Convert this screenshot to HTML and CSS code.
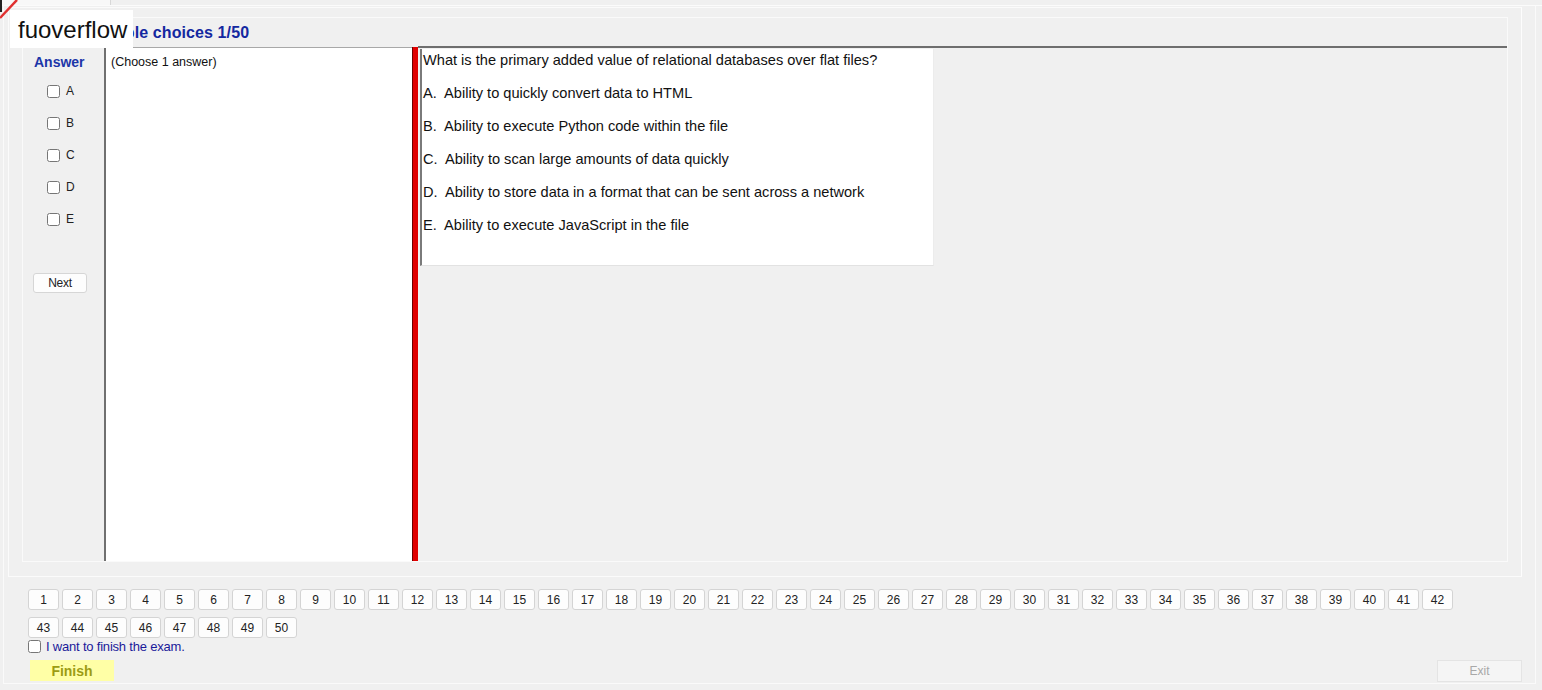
FILE: index.html
```html
<!DOCTYPE html>
<html lang="en">
<head>
    <meta charset="UTF-8">
    <title>Exam - Multiple choices</title>
    <link rel="stylesheet" href="styles.css">
</head>
<body>
    <div class="tabstrip"><div class="tab"></div></div>

    <div class="frame">
        <div class="panel">
            <div class="group">
                <h1 class="title">Multiple choices 1/50</h1>
                <div class="workspace">
                    <div class="answer-col">
                        <div class="answer-head">Answer</div>
                        <label class="opt"><input type="checkbox"> A</label>
                        <label class="opt"><input type="checkbox"> B</label>
                        <label class="opt"><input type="checkbox"> C</label>
                        <label class="opt"><input type="checkbox"> D</label>
                        <label class="opt"><input type="checkbox"> E</label>
                        <button class="next-btn">Next</button>
                    </div>
                    <div class="choose-box">(Choose 1 answer)</div>
                    <div class="splitter"></div>
                    <div class="question-area">
                        <div class="question-box">
                            <p>What is the primary added value of relational databases over flat files?</p>
                            <p>A.&nbsp; Ability to quickly convert data to HTML</p>
                            <p>B.&nbsp; Ability to execute Python code within the file</p>
                            <p>C.&nbsp; Ability to scan large amounts of data quickly</p>
                            <p>D.&nbsp; Ability to store data in a format that can be sent across a network</p>
                            <p>E.&nbsp; Ability to execute JavaScript in the file</p>
                        </div>
                    </div>
                </div>
            </div>
        </div>

        <div class="nav" id="nav"></div>

        <label class="finish-check"><input type="checkbox"> I want to finish the exam.</label>

        <div class="bottom">
            <button class="finish-btn">Finish</button>
            <button class="exit-btn" disabled>Exit</button>
        </div>
    </div>

    <div class="watermark">fuoverflow</div>
    <svg class="corner" width="20" height="20" viewBox="0 0 20 20">
        <line x1="1" y1="0" x2="1" y2="12" stroke="#222" stroke-width="2"/>
        <line x1="0" y1="18" x2="17" y2="0" stroke="#e03030" stroke-width="2.5"/>
    </svg>

    <script>
        // question number buttons, 42 per row
        const nav = document.getElementById('nav');
        let row;
        for (let i = 1; i <= 50; i++) {
            if ((i - 1) % 42 === 0) {
                row = document.createElement('div');
                row.className = 'nav-row';
                nav.appendChild(row);
            }
            const btn = document.createElement('button');
            btn.className = 'num-btn';
            btn.textContent = i;
            row.appendChild(btn);
        }
    </script>
</body>
</html>
```

FILE: styles.css
```css
body {
    margin: 0;
    background-color: #f0f0f0;
    font-family: "Liberation Sans", Arial, sans-serif;
    color: #111;
    width: 1542px;
    height: 690px;
    overflow: hidden;
    position: relative;
}
.tabstrip {
    height: 5px;
    border-bottom: 1px solid #fbfbfb;
}
.tab {
    width: 110px;
    height: 5px;
    background: #f8f8f8;
    border-right: 1px solid #d8d8d8;
}
.frame {
    margin: 0 6px 0 3px;
    height: 678px;
    border: 1px solid #fafafa;
    border-top: none;
    padding: 1px 0 0 4px;
    box-sizing: border-box;
}
.panel {
    width: 1514px;
    height: 570px;
    box-sizing: border-box;
    border: 1px solid #fbfbfb;
    border-right-color: #fdfdfd;
    padding: 9px 13px 0 13px;
}
.group {
    height: 545px;
    box-sizing: border-box;
    border: 1px solid #fafafa;
    display: flex;
    flex-direction: column;
}
.title {
    margin: 0;
    height: 28px;
    line-height: 29px;
    padding-left: 64px;
    font-size: 16px;
    font-weight: bold;
    letter-spacing: 0.1px;
    color: #1428a0;
}
.workspace {
    flex: 1;
    display: flex;
}
.answer-col {
    width: 81px;
    box-sizing: border-box;
    display: flex;
    flex-direction: column;
    align-items: flex-start;
    padding: 8px 0 0 11px;
}
.answer-head {
    font-size: 14px;
    font-weight: bold;
    color: #1c36a8;
    height: 24px;
}
.opt {
    display: flex;
    align-items: center;
    height: 32px;
    margin-left: 13px;
    font-size: 12px;
    color: #222;
    margin-top: -3px;
    margin-bottom: 3px;
}
.opt input {
    width: 13px;
    height: 13px;
    margin: 0 6px 0 0;
}
.next-btn {
    margin: 35px 0 0 -1px;
    width: 54px;
    height: 20px;
    padding: 0;
    background: #fdfdfd;
    border: 1px solid #d6d6d6;
    border-radius: 3px;
    font-family: "Liberation Sans", Arial, sans-serif;
    font-size: 12px;
    color: #222;
    letter-spacing: -0.3px;
}
.choose-box {
    width: 308px;
    margin-top: 1px;
    background: #fff;
    border-left: 2px solid #707070;
    border-top: 1px solid #a8a8a8;
    box-sizing: border-box;
    padding: 7px 0 0 5px;
    font-size: 12.5px;
    color: #111;
}
.splitter {
    width: 6px;
    margin-top: 1px;
    background: #e00000;
    border-left: 1px solid #700000;
    box-sizing: border-box;
}
.question-area {
    flex: 1;
    border-top: 2px solid #6e6e6e;
    padding: 1px 0 0 2px;
}
.question-box {
    width: 514px;
    height: 217px;
    box-sizing: border-box;
    background: #fff;
    border-left: 2px solid #7a7a7a;
    border-bottom: 1px solid #e2e2e2;
    border-right: 1px solid #ececec;
    padding: 3px 0 0 1px;
    font-size: 14.6px;
}
.question-box p {
    margin: 0 0 16px;
    line-height: 17px;
}
.nav {
    margin: 12px 0 0 20px;
    display: flex;
    flex-direction: column;
    gap: 7px;
}
.nav-row {
    display: flex;
    gap: 3px;
}
.num-btn {
    width: 31px;
    height: 21px;
    padding: 0;
    background: #fdfdfd;
    border: 1px solid #d4d4d4;
    border-radius: 3px;
    font-family: "Liberation Sans", Arial, sans-serif;
    font-size: 12px;
    color: #222;
}
.finish-check {
    display: flex;
    align-items: center;
    margin: 1px 0 0 20px;
    height: 14px;
    font-size: 13px;
    color: #1a1a9a;
    letter-spacing: -0.2px;
}
.finish-check input {
    width: 13px;
    height: 13px;
    margin: 0 5px 0 0;
}
.bottom {
    display: flex;
    justify-content: space-between;
    margin: 7px 13px 0 22px;
}
.finish-btn {
    width: 84px;
    height: 21px;
    padding: 0;
    background: #ffffa6;
    border: none;
    font-family: "Liberation Sans", Arial, sans-serif;
    font-size: 14px;
    font-weight: bold;
    color: #9c9c14;
}
.exit-btn {
    width: 85px;
    height: 22px;
    padding: 0;
    background: #f5f5f5;
    border: 1px solid #e4e4e4;
    font-family: "Liberation Sans", Arial, sans-serif;
    font-size: 12px;
    color: #a8a8a8;
}
.watermark {
    position: absolute;
    left: 10px;
    top: 10px;
    width: 123px;
    height: 38px;
    background: #fff;
    font-size: 24px;
    line-height: 40px;
    padding-left: 8px;
    box-sizing: border-box;
    color: #111;
}
.corner {
    position: absolute;
    left: 0;
    top: 0;
}
```
